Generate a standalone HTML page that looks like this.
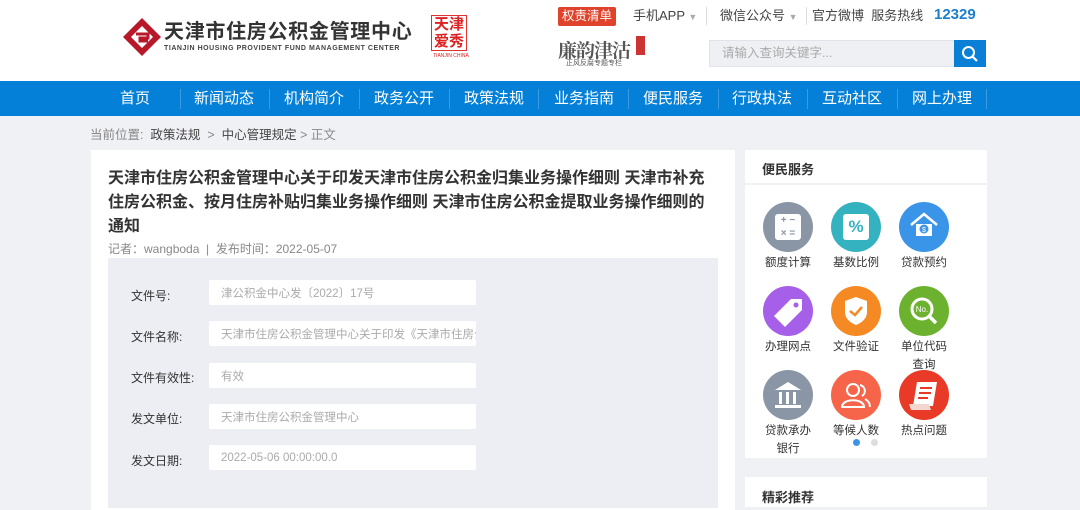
<!DOCTYPE html>
<html><head><meta charset="utf-8"><style>
*{margin:0;padding:0;box-sizing:border-box}
body{width:1080px;height:499px;overflow:hidden;background:#f0f1f5;font-family:"Liberation Sans","Noto Sans CJK SC",sans-serif;position:relative;color:#333}
.a{position:absolute}
.hdr{left:0;top:0;width:1080px;height:81px;background:#fff}
.nav{left:0;top:81px;width:1080px;height:35px;background:#0580d8}
.nav span{position:absolute;top:0;line-height:35px;color:#fff;font-size:15px;text-align:center;width:90px}
.nav i{position:absolute;top:8px;width:1px;height:20px;background:#3a9be3}
.card{background:#fff}
.lab{font-size:12px;color:#333}
.inp{background:#fff;width:267px;height:25px;border-radius:2px;font-size:11.5px;color:#aaa;padding-left:12px;white-space:nowrap;overflow:hidden;display:flex;align-items:center}
.ic{width:50px;height:50px;border-radius:50%}
.il{font-size:11.5px;color:#333;text-align:center;width:70px}
</style></head><body>
<div class="a hdr"></div>
<svg class="a" style="left:122px;top:17px" width="40" height="40" viewBox="0 0 40 40"><path d="M20 1 L39 20 L20 39 L1 20Z" fill="#b8192a"/><path d="M20 9 L31 20 L20 31 L9 20Z" fill="#fff"/><path d="M14 17 h12 v4 h-8 v3 h8" stroke="#b8192a" stroke-width="3" fill="none"/></svg>
<div class="a" style="left:164px;top:20px;font-size:20px;font-weight:bold;color:#333;letter-spacing:0.7px;line-height:24px;white-space:nowrap">天津市住房公积金管理中心</div>
<div class="a" style="left:164px;top:45px;font-size:7px;color:#444;letter-spacing:0.55px;font-weight:bold;white-space:nowrap">TIANJIN HOUSING PROVIDENT FUND MANAGEMENT CENTER</div>
<div class="a" style="left:431px;top:15px;width:36px;height:36px;border:1px solid #d33;color:#d22;font-size:15px;line-height:17px;text-align:center;font-weight:bold">天津<br>爱秀</div>
<div class="a" style="left:433px;top:53px;font-size:5px;color:#d22">TIANJIN CHINA</div>
<div class="a" style="left:558px;top:7px;width:58px;height:19px;background:#e0432c;border-radius:2px;color:#fff;font-size:12.5px;line-height:19px;text-align:center">权责清单</div>
<div class="a" style="left:633px;top:7px;font-size:13px;color:#444;line-height:18px">手机APP <span style="color:#aaa;font-size:9px">▼</span></div>
<div class="a" style="left:706px;top:7px;width:1px;height:18px;background:#ddd"></div>
<div class="a" style="left:720px;top:7px;font-size:13px;color:#444;line-height:18px">微信公众号 <span style="color:#aaa;font-size:9px">▼</span></div>
<div class="a" style="left:806px;top:7px;width:1px;height:18px;background:#ddd"></div>
<div class="a" style="left:812px;top:7px;font-size:13px;color:#444;line-height:18px">官方微博&nbsp; 服务热线</div>
<div class="a" style="left:934px;top:5px;font-size:15px;color:#1a7fd0;font-weight:bold;line-height:20px">12329</div>
<div class="a" style="left:558px;top:36px;font-size:19px;color:#555;font-family:'Noto Serif CJK SC',serif;font-weight:bold;letter-spacing:-1px">廉韵津沽</div>
<div class="a" style="left:636px;top:36px;width:9px;height:19px;background:#c33"></div>
<div class="a" style="left:566px;top:58px;font-size:7px;color:#555">正风反腐专题专栏</div>
<div class="a" style="left:709px;top:40px;width:246px;height:27px;background:#eef0f4;border:1px solid #e0e3ea;font-size:12.5px;color:#aaa;line-height:25px;padding-left:12px">请输入查询关键字...</div>
<div class="a" style="left:954px;top:40px;width:32px;height:27px;background:#0a7fd6"></div>
<svg class="a" style="left:961px;top:45px" width="18" height="18" viewBox="0 0 18 18"><circle cx="7.5" cy="7.5" r="5.5" stroke="#fff" stroke-width="2" fill="none"/><path d="M11.5 11.5 L16 16" stroke="#fff" stroke-width="2.2"/></svg>
<div class="a nav">
<span style="left:90px">首页</span><i style="left:180px"></i>
<span style="left:179px">新闻动态</span><i style="left:269px"></i>
<span style="left:269px">机构简介</span><i style="left:359px"></i>
<span style="left:359px">政务公开</span><i style="left:449px"></i>
<span style="left:449px">政策法规</span><i style="left:538px"></i>
<span style="left:539px">业务指南</span><i style="left:628px"></i>
<span style="left:628px">便民服务</span><i style="left:718px"></i>
<span style="left:717px">行政执法</span><i style="left:807px"></i>
<span style="left:807px">互动社区</span><i style="left:897px"></i>
<span style="left:897px">网上办理</span><i style="left:986px"></i>
</div>
<div class="a" style="left:90px;top:127px;font-size:12.5px;color:#888;line-height:16px">当前位置: &nbsp;<span style="color:#444">政策法规</span> &nbsp;&gt;&nbsp; <span style="color:#444">中心管理规定</span> &gt; 正文</div>
<div class="a card" style="left:91px;top:150px;width:644px;height:360px"></div>
<div class="a" style="left:108px;top:167px;width:610px;font-size:16px;font-weight:bold;color:#333;line-height:24px">天津市住房公积金管理中心关于印发天津市住房公积金归集业务操作细则 天津市补充住房公积金、按月住房补贴归集业务操作细则 天津市住房公积金提取业务操作细则的通知</div>
<div class="a" style="left:108px;top:241px;font-size:12px;color:#888;line-height:16px">记者：wangboda &nbsp;|&nbsp; 发布时间：2022-05-07</div>
<div class="a" style="left:108px;top:258px;width:610px;height:250px;background:#eceef3"></div>
<div class="a lab" style="left:131px;top:287px">文件号:</div><div class="a inp" style="left:209px;top:280px">津公积金中心发〔2022〕17号</div>
<div class="a lab" style="left:131px;top:328px">文件名称:</div><div class="a inp" style="left:209px;top:321px">天津市住房公积金管理中心关于印发《天津市住房公积</div>
<div class="a lab" style="left:131px;top:369px">文件有效性:</div><div class="a inp" style="left:209px;top:363px">有效</div>
<div class="a lab" style="left:131px;top:410px">发文单位:</div><div class="a inp" style="left:209px;top:404px">天津市住房公积金管理中心</div>
<div class="a lab" style="left:131px;top:452px">发文日期:</div><div class="a inp" style="left:209px;top:445px">2022-05-06 00:00:00.0</div>
<div class="a card" style="left:745px;top:150px;width:242px;height:33px"></div>
<div class="a" style="left:762px;top:159px;font-size:13px;font-weight:bold;color:#333">便民服务</div>
<div class="a card" style="left:745px;top:185px;width:242px;height:273px"></div>
<div class="a ic" style="left:763px;top:202px;background:#8a95a5"></div>
<div class="a" style="left:775px;top:214px;width:26px;height:26px;background:#fff;border-radius:3px;font-size:10px;color:#8a95a5;line-height:13px;text-align:center;font-weight:bold">+ −<br>× =</div>
<div class="a ic" style="left:831px;top:202px;background:#35b2bf"></div>
<div class="a" style="left:843px;top:214px;width:26px;height:26px;background:#fff;border-radius:3px;font-size:17px;color:#35b2bf;line-height:26px;text-align:center;font-weight:bold">%</div>
<div class="a ic" style="left:899px;top:202px;background:#3a95e8"></div>
<svg class="a" style="left:906px;top:208px" width="36" height="36" viewBox="0 0 36 36"><path d="M5 17 L18 6 L31 17" stroke="#fff" stroke-width="2.5" fill="none"/><rect x="10" y="16" width="16" height="12" fill="#fff"/><circle cx="18" cy="21" r="4.5" fill="#3a95e8"/><text x="18" y="24" font-size="7" fill="#fff" text-anchor="middle" font-family="Liberation Sans">$</text></svg>
<div class="a il" style="left:753px;top:254px">额度计算</div>
<div class="a il" style="left:821px;top:254px">基数比例</div>
<div class="a il" style="left:889px;top:254px">贷款预约</div>
<div class="a ic" style="left:763px;top:286px;background:#a55fe8"></div>
<svg class="a" style="left:763px;top:286px" width="50" height="50" viewBox="0 0 50 50"><path d="M11 30 L28 13 L39 13 L39 24 L22 41Z" fill="#fff"/><circle cx="33" cy="19" r="2.5" fill="#a55fe8"/></svg>
<div class="a ic" style="left:831px;top:286px;background:#f58a25"></div>
<svg class="a" style="left:831px;top:286px" width="50" height="50" viewBox="0 0 50 50"><path d="M25 11 L36 15 V26 C36 33 30 37 25 39 C20 37 14 33 14 26 V15Z" fill="#fff"/><path d="M19 25 L24 29 L31 21" stroke="#f58a25" stroke-width="2.5" fill="none"/></svg>
<div class="a ic" style="left:899px;top:286px;background:#6cb22f"></div>
<svg class="a" style="left:899px;top:286px" width="50" height="50" viewBox="0 0 50 50"><circle cx="23" cy="23" r="10" stroke="#fff" stroke-width="3" fill="none"/><path d="M30 30 L37 37" stroke="#fff" stroke-width="3.5"/><text x="23" y="26" font-size="8" fill="#fff" text-anchor="middle" font-family="Liberation Sans">No.</text></svg>
<div class="a il" style="left:753px;top:338px">办理网点</div>
<div class="a il" style="left:821px;top:338px">文件验证</div>
<div class="a il" style="left:889px;top:338px;line-height:18px">单位代码<br>查询</div>
<div class="a ic" style="left:763px;top:370px;background:#8a95a5"></div>
<svg class="a" style="left:763px;top:370px" width="50" height="50" viewBox="0 0 50 50"><path d="M12 20 L25 12 L38 20Z" fill="#fff"/><rect x="16" y="22" width="3" height="12" fill="#fff"/><rect x="23" y="22" width="3" height="12" fill="#fff"/><rect x="30" y="22" width="3" height="12" fill="#fff"/><rect x="12" y="35" width="26" height="3" fill="#fff"/></svg>
<div class="a ic" style="left:831px;top:370px;background:#f6654a"></div>
<svg class="a" style="left:831px;top:370px" width="50" height="50" viewBox="0 0 50 50"><circle cx="22" cy="20" r="6" stroke="#fff" stroke-width="2" fill="none"/><path d="M11 37 C11 28 33 28 33 37Z" stroke="#fff" stroke-width="2" fill="none"/><path d="M29 15 A6 6 0 0 1 31 26 M34 29 C38 31 39 34 39 37" stroke="#fff" stroke-width="2" fill="none"/></svg>
<div class="a ic" style="left:899px;top:370px;background:#e83a26"></div>
<svg class="a" style="left:899px;top:370px" width="50" height="50" viewBox="0 0 50 50"><path d="M18 12 H38 L34 36 H14Z" fill="#fff"/><path d="M10 34 H30 L32 40 H12Z" fill="#f4d6d0"/><path d="M21 18 H33 M20 23 H32 M19 28 H29" stroke="#e83a26" stroke-width="2"/></svg>
<div class="a il" style="left:753px;top:422px;line-height:18px">贷款承办<br>银行</div>
<div class="a il" style="left:821px;top:422px">等候人数</div>
<div class="a il" style="left:889px;top:422px">热点问题</div>
<div class="a" style="left:853px;top:439px;width:7px;height:7px;border-radius:50%;background:#3a95e8"></div>
<div class="a" style="left:871px;top:439px;width:7px;height:7px;border-radius:50%;background:#ddd"></div>
<div class="a card" style="left:745px;top:477px;width:242px;height:30px"></div>
<div class="a" style="left:762px;top:487px;font-size:13px;font-weight:bold;color:#333">精彩推荐</div>
</body></html>
